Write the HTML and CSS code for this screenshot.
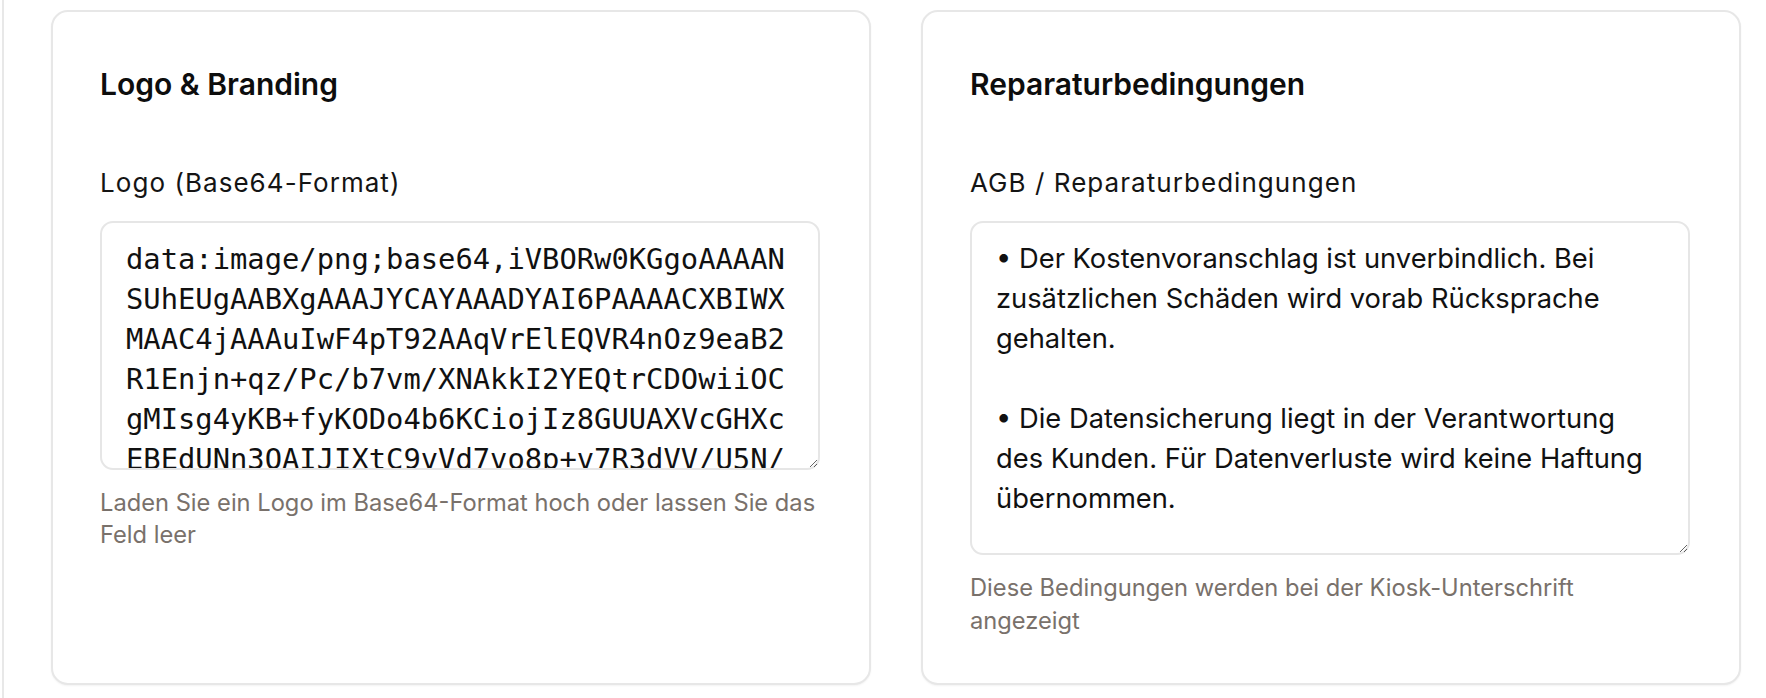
FILE: index.html
```html
<!DOCTYPE html>
<html lang="de">
<head>
<meta charset="utf-8">
<title>Einstellungen</title>
<link rel="stylesheet" href="styles.css">
</head>
<body>
<main class="page">
  <div class="grid">
    <section class="card">
      <h2 class="card-title">Logo &amp; Branding</h2>
      <label class="field-label" for="logo">Logo (Base64-Format)</label>
      <textarea id="logo" class="input mono logo-input" spellcheck="false">data:image/png;base64,iVBORw0KGgoAAAANSUhEUgAABXgAAAJYCAYAAADYAI6PAAAACXBIWXMAAC4jAAAuIwF4pT92AAqVrElEQVR4nOz9eaB2R1Enjn+qz/Pc/b7vm/XNAkkI2YEQtrCDOwiiOCgMIsg4yKB+fyKODo4b6KCiojIz8GUUAXVcGHXcEBEdUNn3QAIJIXtC9vVd7vo8p+v7R3dVV/U5N/fT7ZkXQ8yHb0P3r2cvR8x7QmY3nLk0xFgr9aP2mLcVqRkU1mT8Yk9Wq7Rl0UaRhjXyI2sQ</textarea>
      <p class="help">Laden Sie ein Logo im Base64-Format hoch oder lassen Sie das Feld leer</p>
    </section>
    <section class="card">
      <h2 class="card-title">Reparaturbedingungen</h2>
      <label class="field-label" for="agb">AGB / Reparaturbedingungen</label>
      <textarea id="agb" class="input terms-input">• Der Kostenvoranschlag ist unverbindlich. Bei zusätzlichen Schäden wird vorab Rücksprache gehalten.

• Die Datensicherung liegt in der Verantwortung des Kunden. Für Datenverluste wird keine Haftung übernommen.</textarea>
      <p class="help help-narrow">Diese Bedingungen werden bei der Kiosk-Unterschrift angezeigt</p>
    </section>
  </div>
</main>
</body>
</html>
```
FILE: styles.css
```css
* {
  box-sizing: border-box;
}

html, body {
  margin: 0;
  padding: 0;
  background: #ffffff;
}

body {
  font-family: Inter, "Noto Sans", "Liberation Sans", sans-serif;
  color: #111111;
  height: 698px;
  overflow: hidden;
}

.page {
  margin-left: 2px;
  border-left: 2px solid #e8e8e8;
  min-height: 698px;
  padding: 10px 0 0 47px;
}

.grid {
  display: grid;
  grid-template-columns: 820px 820px;
  column-gap: 50px;
  align-items: stretch;
}

.card {
  height: 675px;
  border: 2px solid #e7e7e7;
  border-radius: 17px;
  background: #ffffff;
  box-shadow: 0 1px 2px rgba(0, 0, 0, 0.05);
  padding: 48px 47px 46px;
  display: flex;
  flex-direction: column;
}

.card-title {
  margin: 0;
  font-size: 30px;
  line-height: 48px;
  font-weight: 600;
  letter-spacing: 0;
  color: #0d0d0d;
}

.field-label {
  display: block;
  margin-top: 57px;
  font-size: 26px;
  line-height: 36px;
  font-weight: 400;
  letter-spacing: 1.05px;
  color: #141414;
}

.input {
  display: block;
  width: 720px;
  margin-top: 19.5px;
  border: 2px solid #e6e6e6;
  border-radius: 13px;
  padding: 16px 24px;
  background: #ffffff;
  color: #111111;
  font-size: 28.8px;
  line-height: 40px;
  outline: none;
  overflow: hidden;
  resize: vertical;
}

.mono {
  font-family: "DejaVu Sans Mono", "Liberation Mono", monospace;
  font-size: 28.8px;
  word-break: break-all;
}

.logo-input {
  height: 249px;
}

.terms-input {
  height: 336px;
  font-family: Inter, "Noto Sans", "Liberation Sans", sans-serif;
  font-size: 27.3px;
}

.help {
  margin: 17px 0 0;
  font-size: 23.7px;
  line-height: 32.4px;
  color: #79716b;
}

.help-narrow {
  max-width: 700px;
}
```
